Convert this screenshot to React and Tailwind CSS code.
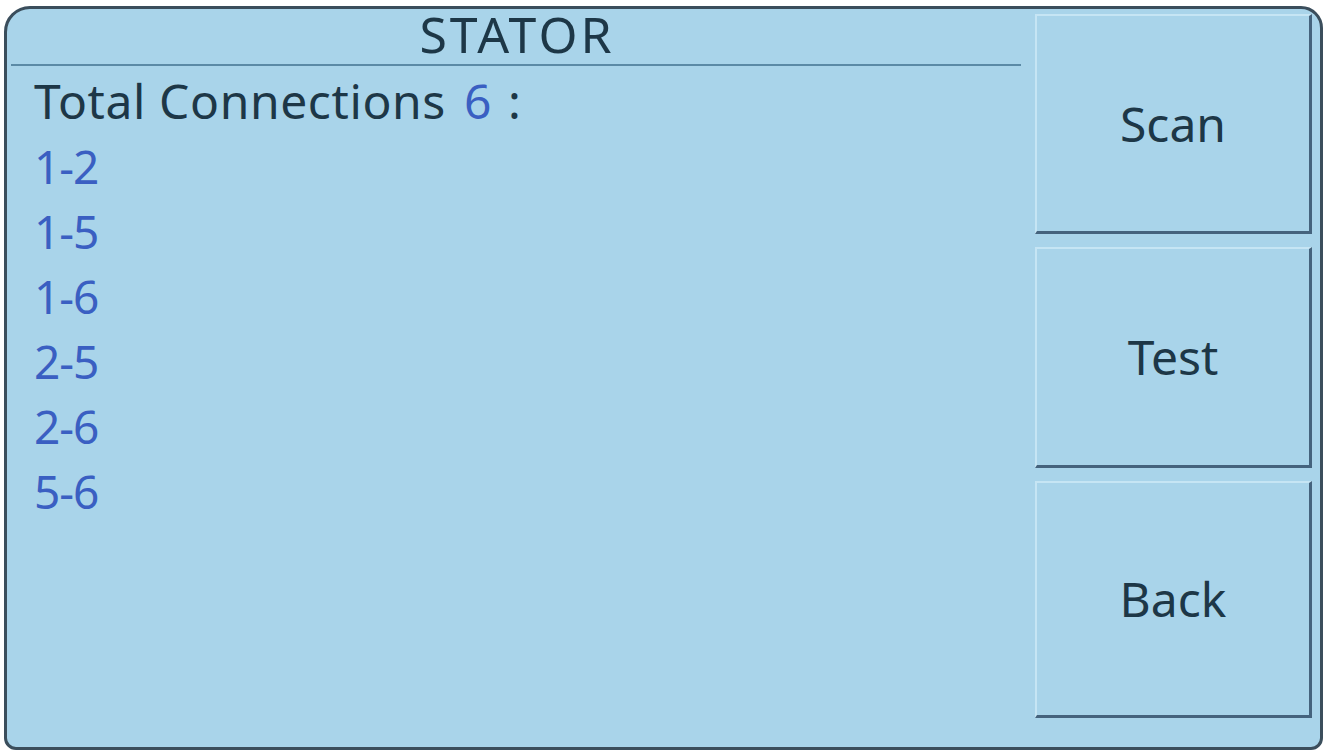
import React from 'react';

const pairs = ['1-2', '1-5', '1-6', '2-5', '2-6', '5-6'];

// bevelled touch button of the stator tester screen
function PanelButton({ label, h }) {
  return (
    <button
      className="flex w-full items-center justify-center border-t-2 border-l-2 border-b-[3px] border-r-[3px] border-t-[#c6e5f4] border-l-[#c6e5f4] border-b-[#45637d] border-r-[#45637d] bg-[#a9d4ea] text-[48px] leading-none text-[#1d3747]"
      style={{ height: h, fontFamily: "'Noto Sans', 'DejaVu Sans', sans-serif" }}
    >
      {label}
    </button>
  );
}

export default function App() {
  return (
    <div className="h-[753px] w-[1327px] bg-white pt-[6px] pl-[4px] pr-[4px] pb-[3px]">
      <div className="flex h-full w-full overflow-hidden rounded-tl-[26px] rounded-tr-[22px] rounded-bl-[12px] rounded-br-[12px] border-[3px] border-[#3b4e5c] bg-[#a9d4ea]">
        {/* left: title + connection list */}
        <div className="flex w-[1014px] flex-col pl-[4px]" style={{ fontFamily: "'Noto Sans', 'DejaVu Sans', sans-serif" }}>
          <div className="flex h-[57px] items-start justify-center border-b-2 border-[#5b8aa6] pl-[2px]">
            <span className="text-[50px] leading-[50px] tracking-[3px] text-[#1d3747]">STATOR</span>
          </div>
          <div className="flex flex-col pl-[23px] pt-[2px]">
            <div className="flex h-[65px] items-center text-[48px] leading-none tracking-[0.6px] text-[#1d3747]">
              <span>Total Connections</span>
              <span className="ml-[18px] text-[#3a5fc2]">6</span>
              <span className="ml-[16px]">:</span>
            </div>
            {pairs.map((p) => (
              <div key={p} className="flex h-[65px] items-center text-[46px] leading-none tracking-[-1px] text-[#3a5fc2]">
                {p}
              </div>
            ))}
          </div>
        </div>

        {/* right: action buttons */}
        <div className="ml-[14px] flex w-[277px] flex-col gap-[13px] pt-[5px]">
          <PanelButton label="Scan" h={220} />
          <PanelButton label="Test" h={221} />
          <PanelButton label="Back" h={237} />
        </div>
      </div>
    </div>
  );
}
